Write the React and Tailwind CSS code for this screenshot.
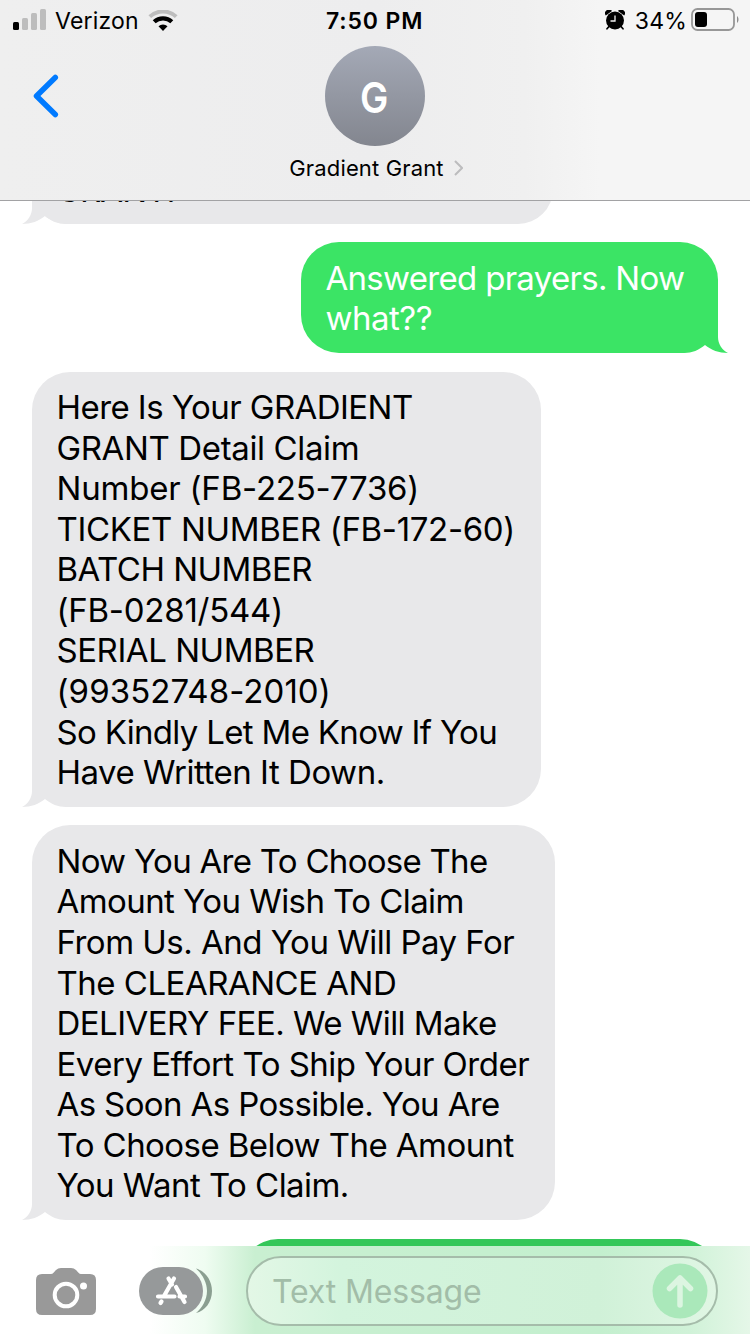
function Bubble({ sent, lines, className }) {
  return (
    <div
      className={
        'relative shrink-0 pl-[24.5px] pt-[15.5px] pb-[14px] rounded-[38px] text-[33px] leading-[40.57px] whitespace-nowrap ' +
        (sent ? 'self-end mr-8 bg-[#3be465] text-white ' : 'ml-8 bg-[#e8e8ea] text-black ') +
        className
      }
    >
      <Tail sent={sent} />
      {lines.map(([text, tracking]) => (
        <p key={text} className={'relative ' + tracking}>
          {text}
        </p>
      ))}
    </div>
  );
}

function Tail({ sent }) {
  return (
    <svg
      viewBox="0 0 48 40"
      className={'absolute bottom-0 w-12 h-10 ' + (sent ? '-right-[10px] -scale-x-100' : '-left-[10px]')}
    >
      <path
        d="M10 0H48V40H44C36 40 29 37 23 32C17 37 9 40 0 40C6 37 10 31 10 24Z"
        fill={sent ? '#3be465' : '#e8e8ea'}
      />
    </svg>
  );
}

function StatusBar() {
  return (
    <div className="relative flex items-center justify-between h-10 pl-[13px] pr-[11px] text-[23px] leading-10">
      <div className="flex items-center">
        <svg viewBox="0 0 34 22" className="w-[34px] h-[22px]">
          <rect x="0" y="13" width="6" height="8" rx="1.5" />
          <rect x="9" y="9" width="6" height="12" rx="1.5" fill="#bdbdbd" />
          <rect x="18" y="4" width="6" height="17" rx="1.5" fill="#bdbdbd" />
          <rect x="27" y="0" width="6" height="21" rx="1.5" fill="#bdbdbd" />
        </svg>
        <span className="mt-[2px] ml-[8px] tracking-[0.2px]">Verizon</span>
        <svg viewBox="0 0 30 22" className="mt-px ml-[9px] w-[30px] h-[22px]" fill="none">
          <path d="M1.800 6.600A19.500 19.500 0 0 1 28.200 6.600" stroke="#bdbdbd" strokeWidth="4" />
          <path d="M6.200 11.800A12.800 12.800 0 0 1 23.800 11.800" stroke="#000" strokeWidth="4.200" />
          <path d="M10.500 16.300A6.500 6.500 0 0 1 19.500 16.300L15 21Z" fill="#000" />
        </svg>
      </div>
      <span className="absolute left-[326px] top-px font-semibold tracking-[0.85px]">7:50 PM</span>
      <div className="flex items-center">
        <svg viewBox="0 0 20 20" className="w-5 h-5">
          <circle cx="10" cy="10.5" r="9" />
          <path d="M.8 5.500A3.400 3.400 0 0 1 7 1ZM19.200 5.500A3.400 3.400 0 0 0 13 1Z" />
          <path d="M4 16.500 2 18.800M16 16.500 18 18.800" stroke="#000" strokeWidth="1.700" strokeLinecap="round" />
          <path d="M10 5.500V11H5.500" stroke="#f1f1f1" strokeWidth="1.300" fill="none" />
        </svg>
        <span className="mt-[2px] ml-[10px] tracking-[0.2px]">34%</span>
        <svg viewBox="0 0 48 24" className="ml-[4px] w-12 h-6">
          <rect x="1" y="1" width="42" height="21" rx="5.500" fill="none" stroke="#979797" strokeWidth="1.800" />
          <rect x="4" y="4" width="12" height="15" rx="3" />
          <path d="M46 8C48 9.500 48 13.500 46 15Z" fill="#8c8c8c" />
        </svg>
      </div>
    </div>
  );
}

function Header() {
  return (
    <header className="relative z-10 flex flex-col h-[201px] shrink-0 border-b border-[#a2a2a4] bg-[linear-gradient(90deg,#efefef,#ededee_50%,#f0f0f0_70%,#f5f5f5_80%)]">
      <StatusBar />
      <div className="relative flex flex-col items-center pt-[6px]">
        <svg viewBox="0 0 26 44" className="absolute left-[33px] top-[34px] w-[26px] h-11" fill="none">
          <path d="M22.300 3.500 3.500 22 22.300 40.500" stroke="#007aff" strokeWidth="5.500" strokeLinecap="round" strokeLinejoin="round" />
        </svg>
        <div className="flex items-center justify-center w-[100px] h-[100px] rounded-full bg-linear-to-b from-[#a4a9b6] to-[#83868f] text-white text-[43px] font-semibold">
          <span className="mt-[2px] mr-[2px] scale-x-88">G</span>
        </div>
        <div className="flex items-center pt-[8px] pl-[2px] text-[22px] leading-7">
          <span className="tracking-[0.15px]">Gradient Grant</span>
          <svg viewBox="0 0 9 16" className="ml-[10px] w-[9px] h-4" fill="none">
            <path d="M1 1 8 8 1 15" stroke="#bcbcbe" strokeWidth="2" />
          </svg>
        </div>
      </div>
    </header>
  );
}

function Composer() {
  return (
    <footer className="relative z-10 flex items-center h-[88px] shrink-0 pl-9 pr-8 bg-[linear-gradient(90deg,#fff_150px,#effcf1_205px,#c9efd1_255px,#c3efce_600px,#d0f2d8_690px,#e5f7e8_750px)]">
      <svg viewBox="0 0 60 47" className="w-[60px] h-[47px] mt-[2px]">
        <path
          d="M6 6H15C17 6 18 4 20 2Q22 0 25 0H35Q38 0 40 2C42 4 43 6 45 6H54Q60 6 60 12V41Q60 47 54 47H6Q0 47 0 41V12Q0 6 6 6Z"
          fill="#999"
        />
        <circle cx="30" cy="27" r="11.300" fill="none" stroke="#fff" strokeWidth="4" />
        <circle cx="47.500" cy="18" r="3.500" fill="#fff" />
      </svg>
      <svg viewBox="0 0 74 48" className="w-[74px] h-12 ml-[43px] mt-[2px]" fill="none">
        <path d="M57 1.500C66 4 73 13 73 24S66 44 57 46C63 41 68 33 68 24S63 7 57 1.500Z" fill="#8b9f91" />
        <rect width="64" height="48" rx="24" fill="#96999a" />
        <g stroke="#fff" strokeWidth="4.200" strokeLinecap="round">
          <path d="M29.500 11.500 33 17.500M35 11.500 25 29M19 29.500H35.500M37 20 45.500 35M40.500 29.500H46M22.500 34.500 21.500 36" />
        </g>
      </svg>
      <div className="flex items-center flex-1 h-[70px] ml-[33px] mt-px pl-[24px] pr-[8px] rounded-full border-2 border-[#a5bcaa] bg-[linear-gradient(90deg,#e3f7e6,#d3f4dd_20%,#d0f1d8_75%,#e0f6e4)]">
        <span className="flex-1 mt-[2px] text-[32px] tracking-[-0.15px] text-[#a2bda8]">Text Message</span>
        <svg viewBox="0 0 56 56" className="w-14 h-14" fill="none">
          <circle cx="28" cy="28" r="27.500" fill="#aae8ba" />
          <path d="M28 42V15M17.500 25.500 28 15 38.500 25.500" stroke="#dcf5e1" strokeWidth="5.500" strokeLinecap="round" strokeLinejoin="round" />
        </svg>
      </div>
    </footer>
  );
}

export default function App() {
  return (
    <div className="flex flex-col w-[750px] h-[1334px] overflow-hidden bg-white font-['Inter',sans-serif]">
      <Header />
      <main className="flex flex-col flex-1 min-h-0 gap-[18.7px]">
        <Bubble lines={[['GRANT!', 'top-[0.5px] tracking-[-1px]']]} className="-mt-[47.500px] w-[521px]" />
        <Bubble
          sent
          lines={[
            ['Answered prayers. Now', 'tracking-[-0.7px]'],
            ['what??', 'tracking-[-0.5px]'],
          ]}
          className="w-[417px]"
        />
        <Bubble
          lines={[
            ['Here Is Your GRADIENT', 'tracking-[-0.56px]'],
            ['GRANT Detail Claim', 'tracking-[-0.37px]'],
            ['Number (FB-225-7736)', 'tracking-[-0.2px]'],
            ['TICKET NUMBER (FB-172-60)', 'tracking-[-0.34px]'],
            ['BATCH NUMBER', 'tracking-[-0.52px]'],
            ['(FB-0281/544)', 'tracking-[-0.25px]'],
            ['SERIAL NUMBER', 'tracking-[-0.45px]'],
            ['(99352748-2010)', 'tracking-[0.07px]'],
            ['So Kindly Let Me Know If You', 'tracking-[-0.68px]'],
            ['Have Written It Down.', 'tracking-[-0.48px]'],
          ]}
          className="w-[509px]"
        />
        <Bubble
          lines={[
            ['Now You Are To Choose The', 'tracking-[-0.72px]'],
            ['Amount You Wish To Claim', 'tracking-[-0.57px]'],
            ['From Us. And You Will Pay For', 'tracking-[-0.51px]'],
            ['The CLEARANCE AND', 'tracking-[-0.5px]'],
            ['DELIVERY FEE. We Will Make', 'tracking-[-0.53px]'],
            ['Every Effort To Ship Your Order', 'tracking-[-0.51px]'],
            ['As Soon As Possible. You Are', 'tracking-[-0.62px]'],
            ['To Choose Below The Amount', 'tracking-[-0.56px]'],
            ['You Want To Claim.', 'tracking-[-0.55px]'],
          ]}
          className="w-[523px]"
        />
        <div className="shrink-0 self-end mr-8 w-[478px] h-20 rounded-[38px] bg-[#34c759]" />
      </main>
      <Composer />
    </div>
  );
}
